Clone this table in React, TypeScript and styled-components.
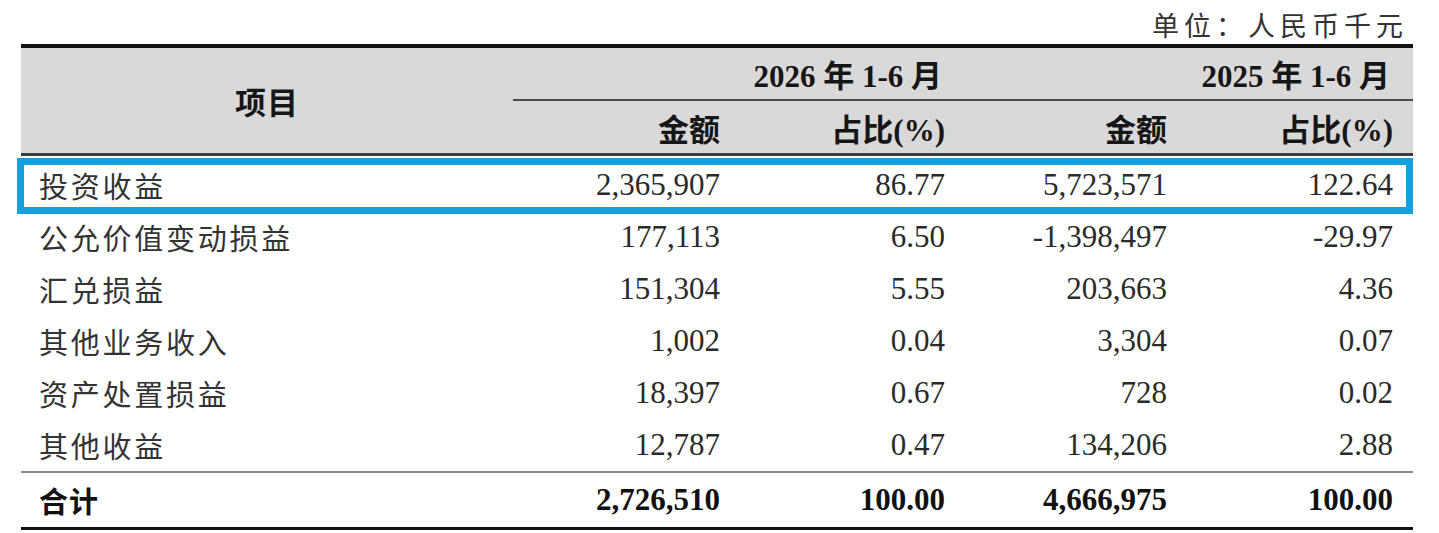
import React from "react";
import styled, { createGlobalStyle } from "styled-components";

const GlobalStyle = createGlobalStyle`
  html, body {
    margin: 0;
    padding: 0;
    background: #ffffff;
  }
  * { box-sizing: border-box; }
`;

const COLS = "492px 227px 225px 222px 226px";
const SERIF = `"Liberation Serif", "Noto Sans CJK SC", serif`;
const CJK = `"Noto Sans CJK SC", "Liberation Sans", sans-serif`;

const Page = styled.div`
  width: 1392px;
  margin-left: 21px;
`;

const Caption = styled.div`
  height: 44px;
  display: flex;
  align-items: center;
  justify-content: flex-end;
  padding-top: 4px;
  padding-right: 5px;
  font-family: ${CJK};
  font-size: 27px;
  letter-spacing: 5px;
  color: #333;
`;

const Header = styled.div`
  display: grid;
  grid-template-columns: ${COLS};
  grid-template-rows: 53px 52px;
  background: #d9d9d9;
  border-top: 4px solid #111;
  border-bottom: 3px solid #3c3c3c;
  font-family: ${SERIF};
  font-weight: 700;
  font-size: 31px;
  color: #161616;
`;

const ItemHead = styled.div`
  grid-row: 1 / span 2;
  display: flex;
  align-items: center;
  justify-content: center;
  font-family: ${CJK};
  letter-spacing: 1px;
`;

const GroupHead = styled.div`
  grid-column: span 2;
  display: flex;
  align-items: center;
  justify-content: flex-end;
  padding-right: 23px;
  border-bottom: 2px solid #4a4a4a;
  white-space: pre;
`;

const SubHead = styled.div`
  display: flex;
  align-items: center;
  justify-content: flex-end;
  padding-right: 20px;
`;

const Body = styled.div`
  padding-top: 3px;
`;

const Row = styled.div<{ $highlight?: boolean }>`
  position: relative;
  display: grid;
  grid-template-columns: ${COLS};
  height: 52px;
  align-items: center;
  color: #2a2a2a;

  ${(p) =>
    p.$highlight &&
    `
    &::after {
      content: "";
      position: absolute;
      top: -1px;
      left: -4px;
      right: 0;
      bottom: -3px;
      border: 7px solid #14a0dc;
      pointer-events: none;
    }
  `}
`;

const TotalRow = styled(Row)`
  height: 59px;
  border-top: 2px solid #8a8a8a;
  border-bottom: 3px solid #111;
  color: #111;
  font-weight: 700;
`;

const Label = styled.div<{ $bold?: boolean }>`
  padding-left: 18px;
  font-family: ${CJK};
  font-size: 29px;
  letter-spacing: ${(p) => (p.$bold ? "1px" : "2.75px")};
  font-weight: ${(p) => (p.$bold ? 700 : 400)};
  color: ${(p) => (p.$bold ? "#111" : "#333")};
`;

const Num = styled.div`
  text-align: right;
  padding-right: 20px;
  font-family: ${SERIF};
  font-size: 31px;
`;

type Line = { label: string; a: string; b: string; c: string; d: string };

const rows: Line[] = [
  { label: "投资收益", a: "2,365,907", b: "86.77", c: "5,723,571", d: "122.64" },
  { label: "公允价值变动损益", a: "177,113", b: "6.50", c: "-1,398,497", d: "-29.97" },
  { label: "汇兑损益", a: "151,304", b: "5.55", c: "203,663", d: "4.36" },
  { label: "其他业务收入", a: "1,002", b: "0.04", c: "3,304", d: "0.07" },
  { label: "资产处置损益", a: "18,397", b: "0.67", c: "728", d: "0.02" },
  { label: "其他收益", a: "12,787", b: "0.47", c: "134,206", d: "2.88" },
];

const total: Line = { label: "合计", a: "2,726,510", b: "100.00", c: "4,666,975", d: "100.00" };

export default function App() {
  return (
    <>
      <GlobalStyle />
      <Page>
        <Caption>单位：人民币千元</Caption>
        <Header>
          <ItemHead>项目</ItemHead>
          <GroupHead>2026 年 1-6 月</GroupHead>
          <GroupHead>2025 年 1-6 月</GroupHead>
          <SubHead>金额</SubHead>
          <SubHead>占比(%)</SubHead>
          <SubHead>金额</SubHead>
          <SubHead>占比(%)</SubHead>
        </Header>
        <Body>
          {rows.map((r, i) => (
            <Row key={r.label} $highlight={i === 0}>
              <Label>{r.label}</Label>
              <Num>{r.a}</Num>
              <Num>{r.b}</Num>
              <Num>{r.c}</Num>
              <Num>{r.d}</Num>
            </Row>
          ))}
          <TotalRow>
            <Label $bold>{total.label}</Label>
            <Num>{total.a}</Num>
            <Num>{total.b}</Num>
            <Num>{total.c}</Num>
            <Num>{total.d}</Num>
          </TotalRow>
        </Body>
      </Page>
    </>
  );
}
